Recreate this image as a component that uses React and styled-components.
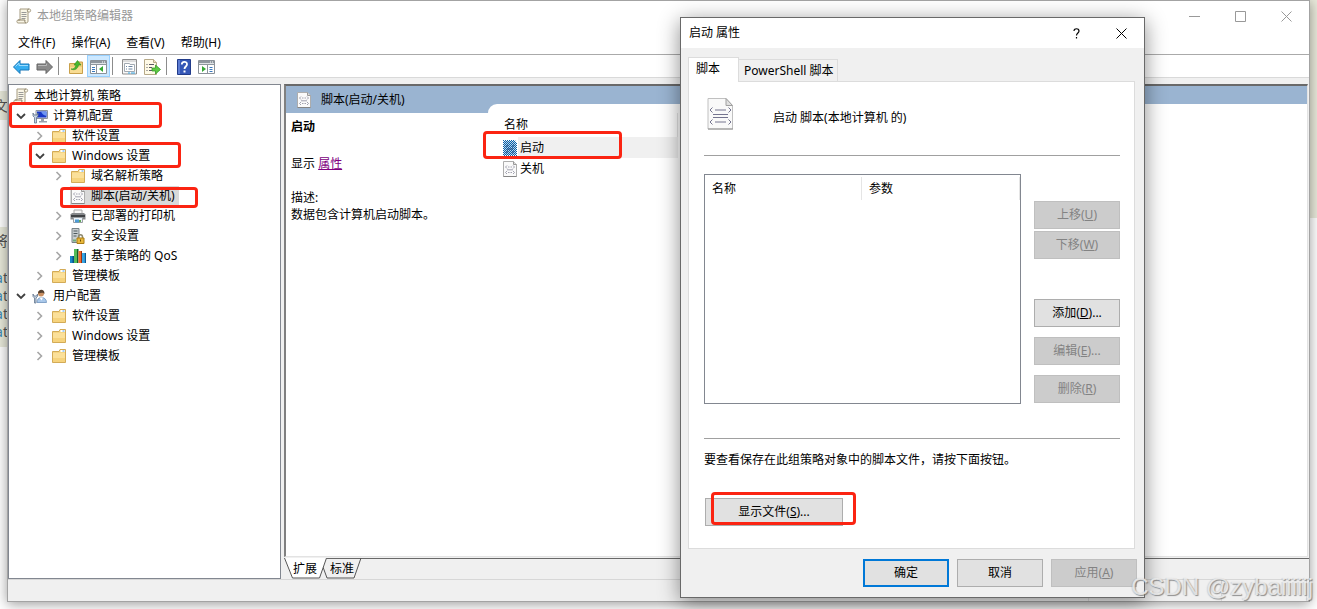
import React from "react";
import styled, { createGlobalStyle, css } from "styled-components";

const GlobalStyle = createGlobalStyle`
  *, *::before, *::after { box-sizing: border-box; }
  body {
    margin: 0;
    font: 12px/20px "Noto Sans", "Noto Sans CJK SC", sans-serif;
    color: #000;
    background: #fff;
  }
  button { font: inherit; color: inherit; }
  ul { list-style: none; margin: 0; padding: 0; }
  p, h2 { margin: 0; font-size: 12px; }
  svg { display: block; flex: none; }
`;

/* ---------- desktop ---------- */

const Desktop = styled.div`
  position: relative;
  display: flex;
  min-height: 100vh;
  min-width: 1160px;
  padding: 0 7px 7px;
  overflow: hidden;
  background: linear-gradient(#e9eadb, #e9eadb) right top / 8px 218px no-repeat, #fff;
`;

const BehindPage = styled.div`
  position: absolute;
  inset: 0 auto 0 0;
  width: 8px;
  padding-top: 91px;
  color: #555;
`;

const BehindBlock = styled.div`
  display: flex;
  flex-direction: column;
  align-items: flex-end;
  height: ${(p) => p.$height}px;
  margin-bottom: 107px;
  padding-top: ${(p) => p.$pad}px;
  background: #e9eadb;
  line-height: 18px;
  white-space: nowrap;
  span { font-size: 14px; }
  span.gap { margin-bottom: 19px; }
  span.code { margin-right: -5px; }
  i { color: #3a8bb5; font-style: normal; }
`;

/* ---------- shared ---------- */

const Mark = styled.span`
  position: absolute;
  z-index: 2;
  inset: ${(p) => p.$inset};
  width: ${(p) => p.$width}px;
  border: 3px solid #fb2412;
  border-radius: 4px;
  pointer-events: none;
`;

const PlainButton = styled.button`
  display: flex;
  align-items: center;
  justify-content: center;
  padding: 0;
  border: 0;
  background: none;
`;

/* ---------- main window ---------- */

const Window = styled.main`
  flex: 1;
  display: flex;
  flex-direction: column;
  border: 1px solid #a3a3a3;
  background: #f0f0f0;
  box-shadow: 0 2px 12px rgba(0, 0, 0, 0.4);
  position: relative;
  min-width: 0;
`;

const TitleBar = styled.header`
  display: flex;
  align-items: center;
  height: 30px;
  padding-left: 8px;
  gap: 5px;
  background: #fff;
  color: #999;
  h1 { flex: 1; margin: 0; font-size: 12px; font-weight: 400; }
`;

const WindowControls = styled.div`
  display: flex;
`;

const WindowButton = styled(PlainButton)`
  width: ${(p) => p.$width || 46}px;
  height: 28px;
`;

const MenuBar = styled.nav`
  display: flex;
  height: 23px;
  padding-left: 2px;
  background: #fff;
`;

const MenuItem = styled(PlainButton)`
  padding: 0 8px;
`;

const ToolBar = styled.div`
  display: flex;
  align-items: center;
  height: 24px;
  padding-left: 2px;
  border-top: 1px solid #aaa;
  border-bottom: 1px solid #d9d9d9;
  background: #fff;
`;

const ToolButton = styled(PlainButton)`
  width: 23px;
  height: 22px;
  padding-top: 2px;
  ${(p) => p.$on && css`
    background: #cce8ff;
    outline: 1px solid #99d1ff;
    outline-offset: -1px;
  `}
`;

const ToolSeparator = styled.span`
  width: 1px;
  height: 18px;
  margin: 0 5px 0 2px;
  background: #8c8c8c;
`;

const Workspace = styled.div`
  flex: 1;
  display: grid;
  grid-template-columns: 273px 1fr;
  gap: 3px;
  padding-top: 6px;
`;

const TreePane = styled.nav`
  padding-top: 1px;
  border: 1px solid #828790;
  background: #fff;
`;

const TreeRow = styled.div`
  position: relative;
  display: flex;
  align-items: center;
  height: 20px;
  padding-left: ${(p) => (p.$level ? p.$level * 19 - 15 : 4)}px;
`;

const Expander = styled(PlainButton)`
  width: 16px;
  height: 20px;
  margin-right: 3px;
`;

const TreeLabel = styled(PlainButton)`
  height: 20px;
  gap: 5px;
  padding: 0 4px 0 0;
  background: ${(p) => (p.$selected ? "#d9d9d9" : "none")};
`;

const ResultArea = styled.div`
  display: flex;
  flex-direction: column;
  min-width: 0;
`;

const ResultPane = styled.section`
  flex: 1;
  display: grid;
  grid-template-columns: 202px 1fr;
  border: 2px solid;
  border-color: #696969 #e3e3e3 #e3e3e3 #808080;
  border-width: 2px 1px 1px 2px;
  margin-right: 1px;
  background: #9ab4d1;
`;

const Details = styled.div`
  display: flex;
  flex-direction: column;
`;

const PaneHeading = styled.div`
  display: flex;
  align-items: center;
  gap: 10px;
  height: 27px;
  padding-left: 11px;
`;

const DetailText = styled.div`
  flex: 1;
  padding: 5px 0 0 5px;
  background: #fff;
  line-height: 17px;
  p { margin-top: 20px; white-space: nowrap; }
  p + p { margin-top: 17px; }
  a { color: #800080; }
`;

const ListArea = styled.div`
  margin-top: 18px;
  padding: 9px 0 0 14px;
  border-top-left-radius: 9px;
  background: #fff;
`;

const FileTable = styled.table`
  width: 176px;
  border-collapse: collapse;
  th {
    height: 24px;
    padding: 0 0 0 2px;
    border-right: 1px solid #e5e5e5;
    font-weight: 400;
    text-align: left;
  }
  td { height: 21px; padding: 0; }
`;

const FileCell = styled.div`
  position: relative;
  display: flex;
  align-items: center;
  height: 21px;
  span.name {
    flex: 1;
    padding-left: 2px;
    line-height: 21px;
    background: ${(p) => (p.$selected ? "#f0f0f0" : "none")};
  }
`;

const ViewTabs = styled.div`
  display: flex;
  height: 21px;
  margin-top: 1px;
  border-top: 1px solid #696969;
`;

const ViewTab = styled(PlainButton)`
  position: relative;
  height: 21px;
  width: 42px;
  margin: -1px -5px 0 0;
  z-index: ${(p) => (p.$active ? 1 : 0)};
  svg { position: absolute; inset: 0 auto auto 0; }
  span { position: relative; }
`;

const StatusBar = styled.footer`
  display: flex;
  justify-content: flex-end;
  height: 22px;
  padding-right: 2px;
  border-top: 1px solid #d7d7d7;
`;

const StatusCell = styled.span`
  width: ${(p) => p.$width}px;
  border-left: 1px solid #dadada;
  &:last-child { border-right: 1px solid #dadada; }
`;

/* ---------- dialog ---------- */

const Dialog = styled.section`
  position: absolute;
  top: 17px;
  left: 680px;
  z-index: 5;
  width: 465px;
  border: 1px solid #696969;
  background: #f0f0f0;
  box-shadow: 0 4px 20px rgba(0, 0, 0, 0.45);
`;

const DialogTitle = styled.header`
  display: flex;
  align-items: center;
  height: 30px;
  padding-left: 8px;
  background: #fff;
  h2 { flex: 1; font-weight: 400; }
`;

const DialogTabs = styled.div`
  display: flex;
  align-items: flex-end;
  padding: 9px 7px 0;
`;

const DialogTab = styled(PlainButton)`
  position: relative;
  z-index: ${(p) => (p.$active ? 1 : 0)};
  height: ${(p) => (p.$active ? 25 : 22)}px;
  margin-bottom: ${(p) => (p.$active ? -1 : 0)}px;
  padding: ${(p) => (p.$active ? "0 18px 2px 7px" : "0 3px 0 5px")};
  border: 1px solid #dcdcdc;
  border-width: ${(p) => (p.$active ? "1px 1px 0" : "1px 1px 0 0")};
  background: ${(p) => (p.$active ? "#fff" : "#f0f0f0")};
`;

const DialogPanel = styled.div`
  margin: 0 9px 0 7px;
  padding: 0 14px 22px 15px;
  border: 1px solid #dcdcdc;
  background: #fff;
`;

const ScriptHeading = styled.div`
  display: flex;
  align-items: center;
  gap: 39px;
  height: 73px;
  padding: 0 0 10px 3px;
  span { padding-top: 8px; }
`;

const Rule = styled.hr`
  height: 1px;
  margin: 0;
  border: 0;
  background: #a0a0a0;
`;

const ScriptRow = styled.div`
  display: grid;
  grid-template-columns: 1fr 86px;
  gap: 13px;
  margin: 18px 0 34px;
`;

const ScriptList = styled.div`
  height: 230px;
  border: 1px solid #828790;
`;

const ScriptTable = styled.table`
  width: 100%;
  padding-top: 2px;
  border-spacing: 0;
  table-layout: fixed;
  th {
    height: 23px;
    padding: 0 0 0 7px;
    border-right: 1px solid #e5e5e5;
    font-weight: 400;
    text-align: left;
  }
  th:first-child { width: 157px; }
`;

const ButtonColumn = styled.div`
  display: flex;
  flex-direction: column;
  gap: 10px;
  padding-top: 27px;
`;

const ButtonPair = styled.div`
  display: flex;
  flex-direction: column;
  gap: 2px;
  margin-bottom: 30px;
`;

const PushButton = styled.button`
  width: ${(p) => p.$width || 86}px;
  height: 28px;
  padding: 0;
  border: ${(p) => (p.$primary ? "2px solid #0078d7" : "1px solid #adadad")};
  background: #e1e1e1;
  &:disabled {
    border-color: #bfbfbf;
    background: #ccc;
    color: #838383;
  }
`;

const ShowFiles = styled.div`
  position: relative;
  margin: 28px 0 0 1px;
`;

const Hint = styled.p`
  padding-top: 11px;
`;

const DialogFooter = styled.footer`
  display: flex;
  justify-content: flex-end;
  gap: 8px;
  padding: 10px 7px;
`;

const Watermark = styled.div`
  position: absolute;
  right: 4px;
  bottom: 6px;
  z-index: 6;
  font: 24px/32px "Liberation Sans", sans-serif;
  color: rgba(238, 238, 238, 0.85);
  text-shadow: 1px 1px 1px rgba(90, 90, 90, 0.65), -1px 0 1px rgba(150, 150, 150, 0.3);
  white-space: nowrap;
`;

/* ---------- icons ---------- */

const Scroll = () => (
  <svg width="16" height="16" viewBox="0 0 16 16">
    <path d="M4 1h9.500c1.500 0 1.500 3 0 3H12v9c0 1.500-1 2-2 2H2c-1.500 0-1.500-3 0-3h2z" fill="#faf6e6" stroke="#a49a80" />
    <path d="M2 12h7c-.5 1.500 0 3 1 3M12 4c-1-.5-.8-3 .8-3" fill="none" stroke="#8d846c" />
    <path d="M5.500 4.500h5M5.500 6.500h5M5.500 8.500h5M5.500 10.500h4" stroke="#9a9a98" />
  </svg>
);

const Folder = () => (
  <svg width="16" height="16" viewBox="0 0 16 16">
    <path d="M1.500 3.500H8l1-2h5.500v13h-13z" fill="#f5d583" stroke="#d3ab57" />
    <path d="M9.500 2h4.500v2H9.500z" fill="#fff" />
    <path d="M11.500 2.500h2v1h-2z" fill="#4b9be0" />
    <path d="M2 5h12v9H2z" fill="#fbe09a" />
    <path d="M2 10h12v4H2z" fill="#f6d37d" />
  </svg>
);

const Script = ({ large }) => (
  <svg width={large ? 27 : 14} height={large ? 32 : 16} viewBox={large ? "0 0 27 32" : "0 0 14 16"}>
    {large ? (
      <>
        <path d="M1 .5h18l6.500 7v23.500H1z" fill="#f9f9f9" stroke="#c0c0c0" />
        <path d="M1 31h25" stroke="#8f8f8f" />
        <path d="M19 .5v7h6.500z" fill="#e0e0e0" stroke="#a0a0a0" />
        <path d="M5.500 9.500 3 12l2.500 2.500M21.500 9.500 24 12l-2.500 2.500M8 12h11M6 16.500h15M6 19.500h15M5.500 21.500 3 24l2.500 2.500M21.500 21.500 24 24l-2.500 2.500M8 24h11" fill="none" stroke="#74748f" />
      </>
    ) : (
      <>
        <path d="M.5.5h10l3 3v12H.5z" fill="#fafafa" stroke="#adadad" />
        <path d="M.5 15.500h13" stroke="#858585" />
        <path d="M10.500.5v3h3" fill="#ddd" stroke="#999" />
        <path d="M4 4.500 2.500 6 4 7.500M10 4.500 11.500 6 10 7.500M5 6h1.500M7.500 6H9M4 8.800h6M4 10 2.500 11.500 4 13M10 10l1.500 1.500L10 13M5 11.500h1.500M7.500 11.500H9" fill="none" stroke="#8a8a9c" strokeWidth=".8" />
      </>
    )}
  </svg>
);

const SelectedScript = () => (
  <svg width="14" height="16" viewBox="0 0 14 16">
    <defs>
      <pattern id="dither" width="2" height="2" patternUnits="userSpaceOnUse">
        <path d="M0 0h1v1H0zM1 1h1v1H1z" fill="#0a5fa8" />
      </pattern>
    </defs>
    <path d="M1 1h10l2 3v11H1z" fill="#b9d3e8" />
    <path d="M3 6h2M9 6h2M4 9h6M3 12h2M9 12h2" stroke="#303860" />
    <path d="M0 0h12l2 3v13H0z" fill="url(#dither)" />
  </svg>
);

const Computer = () => (
  <svg width="16" height="16" viewBox="0 0 16 16">
    <path d="M4 2.500h11.500v8H4z" fill="#d9dde3" stroke="#8c939f" />
    <path d="M5 3.500h9.500v6H5z" fill="#1838c8" />
    <path d="M9 3.500h5.500v4.500C11 7 10 5.500 9 3.500z" fill="#6f95f2" />
    <path d="M9 11h3v2H9zM7 13h8v1.500H7z" fill="#9aa0ab" />
    <path d="M1 5v3l1.500 1.500V15h2V9.500L6 8V5L5 7H2z" fill="#c7d3e2" stroke="#5f748d" strokeWidth=".8" />
  </svg>
);

const User = () => (
  <svg width="16" height="16" viewBox="0 0 16 16">
    <path d="M5 14.500c0-3.500 2-5 4.500-5s5 1.500 5 5z" fill="#a9c8ea" stroke="#6f93bd" strokeWidth=".8" />
    <path d="m7.500 9.500 2 3 1.500-3z" fill="#fff" />
    <circle cx="9" cy="5.500" r="3" fill="#c98f62" />
    <path d="M6 5.500c0-5 7-5 6.500.5C11 4 9 5 6 5.500z" fill="#54402f" />
    <path d="M1 6v2.500L2.500 10v5h1.500v-5l1.500-1.500V6L4.500 8H2z" fill="#c7d3e2" stroke="#5f748d" strokeWidth=".8" />
  </svg>
);

const Printer = () => (
  <svg width="16" height="16" viewBox="0 0 16 16">
    <path d="M4 2h8v5H4z" fill="#f7f7f7" stroke="#aaa" />
    <path d="M.5 6.500 2 5h12l1.500 1.500v5H.5z" fill="#85888b" />
    <path d="M1 8h14" stroke="#3f4245" strokeWidth="2" />
    <path d="M3.500 9.500h9v5h-9z" fill="#eaf3fa" stroke="#9b9fa3" />
    <path d="M5 11.500h4v3H5z" fill="#4c9bd5" /><path d="M9 12h2v2H9z" fill="#61a858" />
  </svg>
);

const Security = () => (
  <svg width="16" height="16" viewBox="0 0 16 16">
    <path d="M2 .5h7v14H2z" fill="#c8ced0" stroke="#788286" />
    <path d="M3.500 3h4M3.500 5.500h4M3.500 8h3" stroke="#4e5a5e" />
    <path d="M3 11.500h3v2H3z" fill="#6fac78" />
    <path d="M8.500 10V9c0-3 4-3 4 0v1" fill="none" stroke="#8e8a70" strokeWidth="1.500" />
    <path d="M7 10h7v5.500H7z" fill="#e9b83c" stroke="#a97c15" />
    <path d="M10.500 11.500v2" stroke="#6c4c00" />
  </svg>
);

const Bars = () => (
  <svg width="16" height="16" viewBox="0 0 16 16">
    <path d="M0 8h4v7H0z" fill="#1787c9" /><path d="M2.500 8H4v7H2.500z" fill="#094e86" />
    <path d="M4 1h4v14H4z" fill="#52bb58" /><path d="M7 1h1.500v14H7z" fill="#155c2b" />
    <path d="M8.500 3H12v12H8.500z" fill="#f26a2c" /><path d="M11 3h1v12h-1z" fill="#9a3211" />
    <path d="M12 5h4v10h-4z" fill="#37a5e4" /><path d="M14.800 5H16v10h-1.200z" fill="#0a5793" />
  </svg>
);

const Arrow = ({ forward }) => (
  <svg width="17" height="16" viewBox="0 0 17 16">
    <path
      d={forward ? "M16.500 8 10 1.500V5H1v6h9v3.500z" : "M.5 8 7 1.500V5h9v6H7v3.500z"}
      fill={forward ? "#8b8b8b" : "#35aef0"}
      stroke={forward ? "#626262" : "#1777b8"}
    />
    <path d={forward ? "M2 6.500h8.500V4.500" : "M2.500 7.500 6 4v2.500h9"} fill="none" stroke={forward ? "#b9b9b9" : "#9bdcff"} />
  </svg>
);

const FolderUp = () => (
  <svg width="16" height="16" viewBox="0 0 16 16">
    <path d="M1.500 4.500H8l1-1.500h5.500v11.500h-13z" fill="#f0ce7a" stroke="#c9a04a" />
    <path d="M2 8h12v6H2z" fill="#f8dc93" />
    <path d="M3 10c3 .5 4.500-1.500 5-4H6L9.500 1.500 13 6h-2.500C10 9.500 7 12 3 10z" fill="#47b82f" stroke="#2d8d1d" strokeWidth=".6" />
  </svg>
);

const ConsoleTree = ({ right }) => (
  <svg width="17" height="14" viewBox="0 0 17 14">
    <path d="M.5.5h16v13H.5z" fill="#fff" stroke="#8b9299" />
    <path d="M1 1h15v4H1z" fill="#8f979e" /><path d="M1 3.500h15" stroke="#dfe3e6" />
    <path d="M12 2h1M14 2h1" stroke="#fff" />
    <path d={right ? "M9.500 5v8" : "M6.500 5v8"} stroke="#8b9299" />
    {right ? (
      <>
        <path d="M4 6v6l4-3z" fill="#35a735" />
        <path d="M11.500 7.500h3M11.500 9.500h3M11.500 11.500h3" stroke="#3b79bd" />
      </>
    ) : (
      <>
        <path d="M2 7.500h3M2 9.500h3M2 11.500h3" stroke="#3b79bd" />
        <path d="M13 6v6L9 9z" fill="#35a735" />
      </>
    )}
  </svg>
);

const Properties = () => (
  <svg width="15" height="16" viewBox="0 0 15 16">
    <path d="M.5.5h14v14.500H.5z" fill="#f8f8f8" stroke="#8e8e8e" />
    <path d="M1 2h13" stroke="#c0c0c0" />
    <path d="M2.500 4.500v8h10V5.500H8L7.500 4.500z" fill="#fff" stroke="#a2aab2" />
    <path d="M4 7.500h1M6.500 7.500h4M4 10h1M6.500 10h4" stroke="#6b84a0" />
    <path d="M6 14h2M9 14h4" stroke="#39a9e8" />
  </svg>
);

const ExportList = () => (
  <svg width="17" height="16" viewBox="0 0 17 16">
    <path d="M.5.5h9l3 3v12H.5z" fill="#fffae6" stroke="#b6a988" />
    <path d="M9.500.5v3h3" fill="#eee3bf" stroke="#b6a988" />
    <path d="M2.500 5.500h1M5 5.500h5M2.500 8.500h1M5 8.500h3M2.500 11.500h1M5 11.500h3" stroke="#5a5a64" />
    <path d="M8 9h3.500V6L16.500 10.500l-5 4.500v-3H8z" fill="#5ccb43" stroke="#37992a" strokeWidth=".8" />
  </svg>
);

const Help = () => (
  <svg width="14" height="16" viewBox="0 0 14 16">
    <path d="M.5.5h13v15H.5z" fill="#3557b7" stroke="#213b8a" />
    <path d="M1 1h2v14H1z" fill="#5c7bd2" />
    <path d="M4.800 5.500C4.800 2 10 2 10 5.200 10 7.500 7.500 7.500 7.500 10" fill="none" stroke="#fff" strokeWidth="1.800" />
    <path d="M6.500 11.500h2v2h-2z" fill="#fff" />
  </svg>
);

const Chevron = ({ open }) => (
  <svg width="10" height="10" viewBox="0 0 10 10" fill="none">
    <path d={open ? "M1 3l4 4 4-4" : "M2.500 1l4 4-4 4"} stroke={open ? "#404040" : "#a6a6a6"} strokeWidth={open ? 1.8 : 1.6} />
  </svg>
);

const Cross = ({ color }) => (
  <svg width="11" height="11" viewBox="0 0 11 11">
    <path d="M.5.5l10 10M10.500.5l-10 10" stroke={color} />
  </svg>
);

/* ---------- data ---------- */

const tree = [
  { label: "本地计算机 策略", level: 0, icon: Scroll },
  { label: "计算机配置", level: 1, icon: Computer, open: true, mark: { $inset: "-4px auto -2px 0", $width: 153 } },
  { label: "软件设置", level: 2, icon: Folder },
  { label: "Windows 设置", level: 2, icon: Folder, open: true, mark: { $inset: "-4px auto -2px 20px", $width: 152 } },
  { label: "域名解析策略", level: 3, icon: Folder },
  { label: "脚本(启动/关机)", level: 3, icon: Script, leaf: true, selected: true, mark: { $inset: "1px auto -2px 51px", $width: 138 } },
  { label: "已部署的打印机", level: 3, icon: Printer },
  { label: "安全设置", level: 3, icon: Security },
  { label: "基于策略的 QoS", level: 3, icon: Bars },
  { label: "管理模板", level: 2, icon: Folder },
  { label: "用户配置", level: 1, icon: User, open: true },
  { label: "软件设置", level: 2, icon: Folder },
  { label: "Windows 设置", level: 2, icon: Folder },
  { label: "管理模板", level: 2, icon: Folder },
];

const IconSlot = styled.span`
  display: flex;
  justify-content: center;
  width: 16px;
`;

function TreeItem({ item }) {
  const Icon = item.icon;
  return (
    <li>
      <TreeRow $level={item.level}>
        {item.level > 0 && (
          <Expander disabled={item.leaf} aria-label={item.open ? "折叠" : "展开"}>
            {!item.leaf && <Chevron open={item.open} />}
          </Expander>
        )}
        <TreeLabel $selected={item.selected}>
          <IconSlot><Icon /></IconSlot>
          {item.label}
        </TreeLabel>
        {item.mark && <Mark {...item.mark} />}
      </TreeRow>
    </li>
  );
}

function MainWindow() {
  return (
    <Window>
      <TitleBar>
        <Scroll />
        <h1>本地组策略编辑器</h1>
        <WindowControls>
          <WindowButton aria-label="最小化">
            <svg width="11" height="11"><path d="M0 5.500h11" stroke="#999" /></svg>
          </WindowButton>
          <WindowButton aria-label="最大化">
            <svg width="11" height="11"><path d="M.5.5h10v10H.5z" fill="none" stroke="#999" /></svg>
          </WindowButton>
          <WindowButton aria-label="关闭"><Cross color="#999" /></WindowButton>
        </WindowControls>
      </TitleBar>
      <MenuBar>
        {["文件(F)", "操作(A)", "查看(V)", "帮助(H)"].map((m) => <MenuItem key={m}>{m}</MenuItem>)}
      </MenuBar>
      <ToolBar>
        <ToolButton aria-label="后退"><Arrow /></ToolButton>
        <ToolButton aria-label="前进"><Arrow forward /></ToolButton>
        <ToolSeparator />
        <ToolButton aria-label="上一级"><FolderUp /></ToolButton>
        <ToolButton aria-label="控制台树" $on><ConsoleTree /></ToolButton>
        <ToolSeparator />
        <ToolButton aria-label="属性"><Properties /></ToolButton>
        <ToolButton aria-label="导出列表"><ExportList /></ToolButton>
        <ToolSeparator />
        <ToolButton aria-label="帮助"><Help /></ToolButton>
        <ToolButton aria-label="操作窗格"><ConsoleTree right /></ToolButton>
      </ToolBar>
      <Workspace>
        <TreePane>
          <ul>{tree.map((item, i) => <TreeItem key={i} item={item} />)}</ul>
        </TreePane>
        <ResultArea>
          <ResultPane>
            <Details>
              <PaneHeading><Script /><span>脚本(启动/关机)</span></PaneHeading>
              <DetailText>
                <h2>启动</h2>
                <p>显示 <a href="#properties">属性</a></p>
                <p>描述:<br />数据包含计算机启动脚本。</p>
              </DetailText>
            </Details>
            <ListArea>
              <FileTable>
                <thead><tr><th>名称</th></tr></thead>
                <tbody>
                  <tr><td>
                    <FileCell $selected>
                      <IconSlot><SelectedScript /></IconSlot><span className="name">启动</span>
                      <Mark $inset="-6px auto -1px -19px" $width={139} />
                    </FileCell>
                  </td></tr>
                  <tr><td>
                    <FileCell><IconSlot><Script /></IconSlot><span className="name">关机</span></FileCell>
                  </td></tr>
                </tbody>
              </FileTable>
            </ListArea>
          </ResultPane>
          <ViewTabs>
            <ViewTab $active>
              <svg width="43" height="21"><path d="M0 0l8 20h27l8-20z" fill="#fff" /><path d="M.5 0l8 20h27l7-20" fill="none" stroke="#555" /></svg>
              <span>扩展</span>
            </ViewTab>
            <ViewTab>
              <svg width="43" height="21"><path d="M2 9l4 11h27l7-20" fill="none" stroke="#555" /></svg>
              <span>标准</span>
            </ViewTab>
          </ViewTabs>
        </ResultArea>
      </Workspace>
      <StatusBar>
        <StatusCell $width={133} />
        <StatusCell $width={86} />
      </StatusBar>
    </Window>
  );
}

function PropertiesDialog() {
  return (
    <Dialog role="dialog" aria-label="启动 属性">
      <DialogTitle>
        <h2>启动 属性</h2>
        <WindowButton aria-label="帮助" $width={45}>
          <svg width="7" height="11" viewBox="0 0 7 11"><path d="M1 3C1 0 6 0 6 3c0 2-2.500 2-2.500 4.500M3.500 9v1.500" fill="none" stroke="#000" strokeWidth="1.200" /></svg>
        </WindowButton>
        <WindowButton aria-label="关闭" $width={45}><Cross color="#000" /></WindowButton>
      </DialogTitle>
      <DialogTabs>
        <DialogTab $active>脚本</DialogTab>
        <DialogTab>PowerShell 脚本</DialogTab>
      </DialogTabs>
      <DialogPanel>
        <ScriptHeading><Script large /><span>启动 脚本(本地计算机 的)</span></ScriptHeading>
        <Rule />
        <ScriptRow>
          <ScriptList>
            <ScriptTable><thead><tr><th>名称</th><th>参数</th></tr></thead></ScriptTable>
          </ScriptList>
          <ButtonColumn>
            <ButtonPair>
              <PushButton disabled>上移(<u>U</u>)</PushButton>
              <PushButton disabled>下移(<u>W</u>)</PushButton>
            </ButtonPair>
            <PushButton>添加(<u>D</u>)...</PushButton>
            <PushButton disabled>编辑(<u>E</u>)...</PushButton>
            <PushButton disabled>删除(<u>R</u>)</PushButton>
          </ButtonColumn>
        </ScriptRow>
        <Rule />
        <Hint>要查看保存在此组策略对象中的脚本文件，请按下面按钮。</Hint>
        <ShowFiles>
          <PushButton $width={138}>显示文件(<u>S</u>)...</PushButton>
          <Mark $inset="-6px auto 1px 6px" $width={145} />
        </ShowFiles>
      </DialogPanel>
      <DialogFooter>
        <PushButton $primary>确定</PushButton>
        <PushButton>取消</PushButton>
        <PushButton disabled>应用(<u>A</u>)</PushButton>
      </DialogFooter>
    </Dialog>
  );
}

export default function App() {
  return (
    <>
      <GlobalStyle />
      <Desktop>
        <BehindPage aria-hidden="true">
          <BehindBlock $height={29} $pad={6}><span>文</span></BehindBlock>
          <BehindBlock $height={120} $pad={5}>
            <span className="gap">将</span>
            <span className="code"><i>a</i>tt</span>
            <span className="code"><i>a</i>tt</span>
            <span className="code"><i>a</i>tt</span>
            <span className="code"><i>a</i>tt</span>
          </BehindBlock>
        </BehindPage>
        <MainWindow />
        <PropertiesDialog />
        <Watermark>CSDN @zybaiiiiij</Watermark>
      </Desktop>
    </>
  );
}
